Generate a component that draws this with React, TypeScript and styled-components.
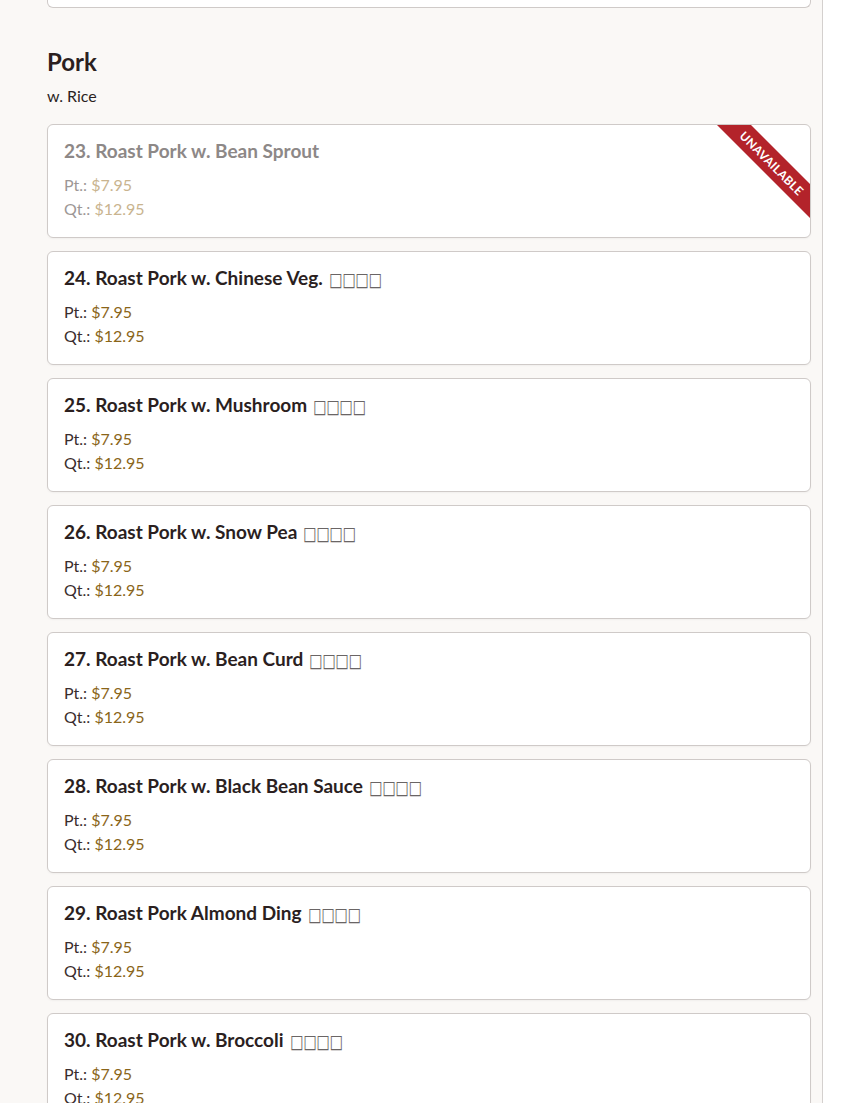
import { FC } from 'react'
import styled, { createGlobalStyle } from 'styled-components'

const GlobalStyle = createGlobalStyle`
  *, *::before, *::after {
    box-sizing: border-box;
  }
  html, body {
    margin: 0;
    padding: 0;
    background: #ffffff;
  }
  body {
    font-family: 'Lato', 'Noto Sans', sans-serif;
    color: #2b1f1f;
  }
`

const Page = styled.div`
  display: flex;
  height: 1103px;
  overflow: hidden;
`

const Menu = styled.main`
  width: 823px;
  flex: none;
  padding: 0 11px 0 47px;
  background: #faf8f6;
  border-right: 1px solid #d4d0ce;
`

const PrevCard = styled.div`
  height: 8px;
  background: #fff;
  border: 1px solid #cfcac8;
  border-top: none;
  border-radius: 0 0 6px 6px;
`

const Section = styled.section`
  padding-top: 38px;
`

const Heading = styled.h2`
  margin: 0;
  font-size: 24px;
  line-height: 32px;
  font-weight: 700;
  color: #2b1f1f;
`

const Note = styled.p`
  margin: 7px 0 17px;
  font-size: 16px;
  line-height: 22px;
  color: #2b1f1f;
`

const List = styled.div`
  display: flex;
  flex-direction: column;
  gap: 13px;
`

const Card = styled.article<{ $off?: boolean }>`
  position: relative;
  overflow: hidden;
  background: #fff;
  border: 1px solid #cfcac8;
  border-radius: 6px;
  padding: 14px 16px 16px;
  box-shadow: 0 1px 2px rgba(0, 0, 0, 0.04);
  color: ${(p) => (p.$off ? '#8d8887' : '#2b1f1f')};
`

const Title = styled.h3`
  margin: 0 0 10px;
  height: 24px;
  font-size: 19px;
  line-height: 24px;
  font-weight: 700;
  color: inherit;
  white-space: nowrap;
`

// stands in for the Chinese name, which the source page showed as missing-glyph boxes
const Tofu = styled.span`
  display: inline-block;
  margin-left: 6px;
  font-family: 'DejaVu Sans', sans-serif;
  font-weight: 400;
  font-size: 16px;
  line-height: 1;
  letter-spacing: -0.5px;
  color: #6a6565;
  transform: scale(0.9, 1.2);
  transform-origin: left center;
`

const PriceRow = styled.div<{ $off?: boolean }>`
  font-size: 16px;
  line-height: 24px;
  color: ${(p) => (p.$off ? '#9d9796' : '#3a2d2d')};
`

const Amount = styled.span<{ $off?: boolean }>`
  color: ${(p) => (p.$off ? '#c9b48f' : '#8a6519')};
`

const Ribbon = styled.div`
  position: absolute;
  top: 26px;
  right: -37px;
  width: 150px;
  height: 24px;
  transform: rotate(45deg);
  background: #b3232a;
  color: #fff;
  font-size: 12px;
  font-weight: 700;
  letter-spacing: 0.3px;
  text-transform: uppercase;
  display: flex;
  align-items: center;
  justify-content: center;
`

const Side = styled.aside`
  flex: 1;
  background: #ffffff;
`

type Dish = { no: number; name: string; off?: boolean }

const dishes: Dish[] = [
  { no: 23, name: 'Roast Pork w. Bean Sprout', off: true },
  { no: 24, name: 'Roast Pork w. Chinese Veg.' },
  { no: 25, name: 'Roast Pork w. Mushroom' },
  { no: 26, name: 'Roast Pork w. Snow Pea' },
  { no: 27, name: 'Roast Pork w. Bean Curd' },
  { no: 28, name: 'Roast Pork w. Black Bean Sauce' },
  { no: 29, name: 'Roast Pork Almond Ding' },
  { no: 30, name: 'Roast Pork w. Broccoli' },
]

const App: FC = () => {
  return (
    <>
      <GlobalStyle />
      <Page>
        <Menu>
          <PrevCard />
          <Section>
            <Heading>Pork</Heading>
            <Note>w. Rice</Note>
            <List>
              {dishes.map((d) => (
                <Card key={d.no} $off={d.off}>
                  {d.off && <Ribbon>Unavailable</Ribbon>}
                  <Title>
                    {d.no}. {d.name}
                    {!d.off && <Tofu>□□□□</Tofu>}
                  </Title>
                  <PriceRow $off={d.off}>
                    Pt.: <Amount $off={d.off}>$7.95</Amount>
                  </PriceRow>
                  <PriceRow $off={d.off}>
                    Qt.: <Amount $off={d.off}>$12.95</Amount>
                  </PriceRow>
                </Card>
              ))}
            </List>
          </Section>
        </Menu>
        <Side />
      </Page>
    </>
  )
}

export default App
